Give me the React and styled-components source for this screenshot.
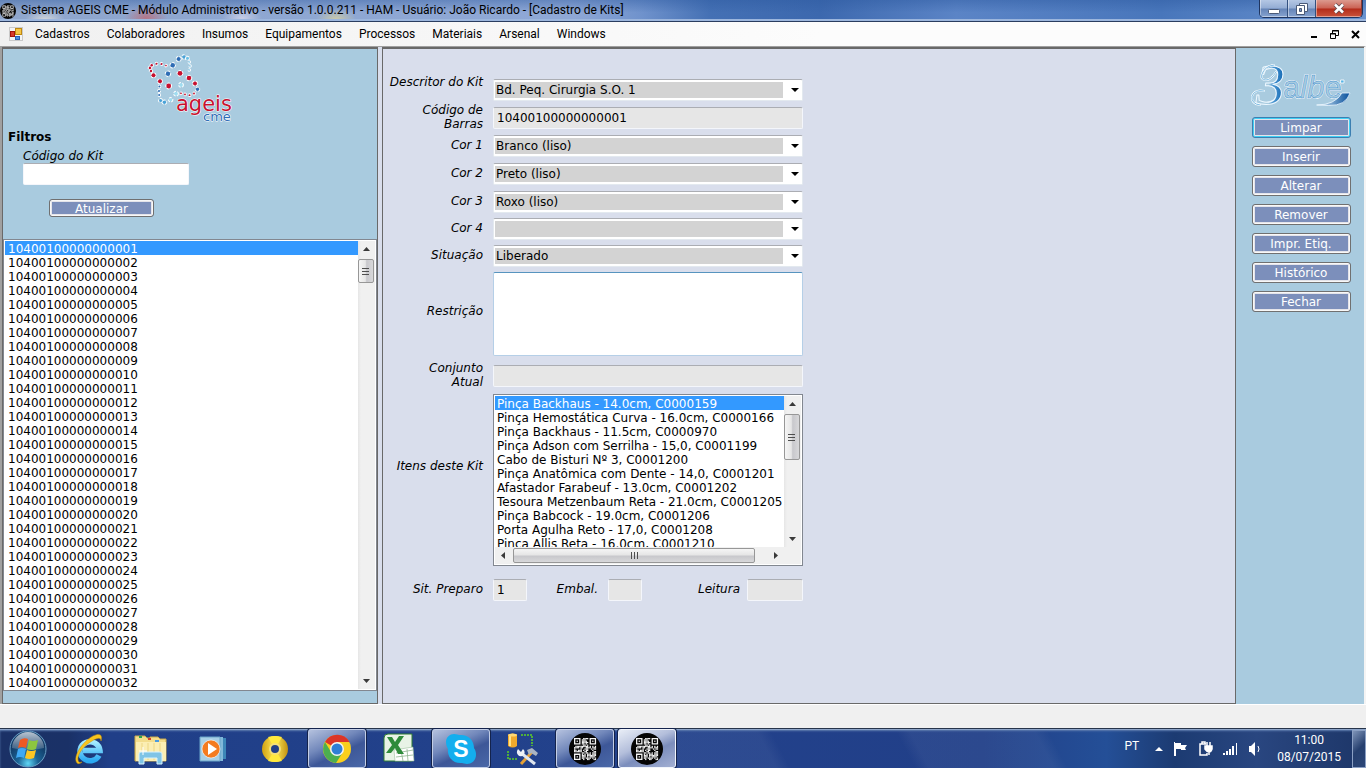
import React from 'react';
import styled, { createGlobalStyle, css } from 'styled-components';

const uiFont = 'Roboto, "Open Sans", sans-serif';
const formFont = '"DejaVu Sans", Verdana, sans-serif';

const GlobalStyle = createGlobalStyle`
  *, *::before, *::after { box-sizing: border-box; }
  body { margin: 0; background: #f0f0f0; font: 12px/14px ${formFont}; color: #000; }
  button, input, select, textarea { font: inherit; color: inherit; margin: 0; border-radius: 0; outline: none; }
`;

const Page = styled.div`
  display: flex;
  flex-direction: column;
  min-height: 100vh;
`;

/* ---------- window frame ---------- */
const TitleBar = styled.header`
  display: flex;
  align-items: flex-start;
  height: 22px;
  border-bottom: 1px solid #2a3d60;
  box-shadow: inset 0 -2px 0 #9cb6dd;
  background:
    radial-gradient(ellipse 20px 10px at 45px 20px, #f3efe0b0, transparent),
    radial-gradient(ellipse 22px 12px at 146px 18px, #d0504f90, transparent),
    radial-gradient(ellipse 20px 10px at 242px 18px, #e8e4f0a0, transparent),
    radial-gradient(ellipse 20px 10px at 336px 19px, #eede90a0, transparent),
    linear-gradient(180deg, #2d5aa070, transparent 60%),
    linear-gradient(90deg, #8fa6cc 0, #8ea7d3 25%, #8fa8d6 42%, #6f92cc 47%, #4470b4 52%, #3c68ae 60%, #5b84c6 70%, #4876bb 85%, #6a93d0 100%);
`;
const AppTitle = styled.h1`
  flex: 1;
  display: flex;
  align-items: center;
  gap: 5px;
  height: 21px;
  margin: 0;
  font: 400 12px/21px ${uiFont};
  white-space: nowrap;
  overflow: hidden;
`;
const WindowButtons = styled.div`
  display: flex;
  height: 18px;
  margin-right: 3px;
  border: 1px solid #1f3560;
  border-top: 0;
  border-radius: 0 0 5px 5px;
  overflow: hidden;
`;
const WindowButton = styled.button`
  display: grid;
  place-items: center;
  width: ${p => (p.$close ? 46 : 28)}px;
  padding: 0;
  border: 0;
  border-right: 1px solid ${p => (p.$close ? '#8e3a34' : '#33507f')};
  box-shadow: inset 1px -1px 0 #ffffff70;
  background: ${p => p.$close
    ? 'linear-gradient(#dc9a8e 0, #cb6253 48%, #b32c1a 52%, #c9533c 100%)'
    : 'linear-gradient(#b4c7e4 0, #93acd3 48%, #6584b7 52%, #86a3d0 100%)'};
`;

const MenuBar = styled.nav`
  display: flex;
  align-items: center;
  height: 24px;
  padding: 0 4px 0 9px;
  background: linear-gradient(90deg, #f0f0f0, #fcfcfc 60%);
`;
const MenuItems = styled.ul`
  flex: 1;
  display: flex;
  gap: 17px;
  margin: 0;
  padding: 0 0 0 12px;
  list-style: none;
`;
const MenuButton = styled.button`
  padding: 0;
  border: 0;
  background: none;
  font: 12px/20px ${uiFont};
`;
const MdiButtons = styled.div`
  display: flex;
  gap: 8px;
`;
const MdiButton = styled.button`
  display: grid;
  place-items: center;
  width: 13px;
  height: 16px;
  padding: 0;
  border: 0;
  background: none;
`;

/* ---------- panels ---------- */
const Workspace = styled.main`
  flex: 1;
  display: grid;
  grid-template-columns: 376px minmax(440px, 1fr) 128px;
  border: solid #a0a0a0;
  border-width: 1px 0 0 2px;
  border-right: 2px solid #f4f4f4;
  background: #d9deec;
`;
const FilterPanel = styled.aside`
  display: flex;
  flex-direction: column;
  padding: 4px 0 12px;
  border: 1px solid #696969;
  border-top-width: 2px;
  background: #a9cbdf;
`;
const FilterForm = styled.form`
  display: flex;
  flex-direction: column;
  align-items: flex-start;
  padding: 6px 5px 22px;
`;
const FilterHeading = styled.h2`
  margin: 0 0 4px;
  font: 700 12px/16px ${formFont};
`;
const FilterLabel = styled.label`
  margin-left: 15px;
  font-style: italic;
`;
const FormPanel = styled.section`
  margin-left: 4px;
  padding: 30px 0 20px;
  border: 1px solid #696969;
  border-top-width: 2px;
`;
const ActionPanel = styled.aside`
  display: flex;
  flex-direction: column;
  align-items: center;
  gap: 8px;
  padding: 3px 0 0 2px;
  border-top: 1px solid #696969;
  background: #a9cbdf;
`;

/* ---------- controls ---------- */
const ActionButton = styled.button`
  width: ${p => (p.$wide ? 105 : 99)}px;
  height: ${p => (p.$wide ? 18 : 21)}px;
  margin: ${p => (p.$wide ? '14px 0 0 41px' : '0')};
  padding: 0;
  border: 1px solid ${p => (p.$focused ? '#3c7fb1' : '#707070')};
  border-radius: 3px;
  box-shadow: inset 0 0 0 1px ${p => (p.$focused ? '#3fd0f5' : '#f8f8f8')}, inset 0 0 0 2px #e4e4ea;
  background: #7c8fbb;
  color: #fff;
  line-height: 18px;
  overflow: hidden;
`;
const TextField = styled.input`
  width: ${p => p.$width || '100%'};
  height: 22px;
  padding: 0 3px;
  border: 1px solid #f4f6fb;
  border-top-color: #abadb3;
  border-radius: 2px;
  background: ${p => (p.readOnly ? '#e6e6e6' : '#fff')};
`;
const FilterField = styled(TextField)`
  margin-left: 15px;
`;
const TextArea = styled.textarea`
  display: block;
  width: 100%;
  height: 84px;
  padding: 2px;
  border: 1px solid #b5cfe7;
  border-top-color: #5794bf;
  border-radius: 2px;
  background: #fff;
  resize: none;
`;
const ComboFrame = styled.div`
  display: grid;
  align-items: center;
  & > * { grid-area: 1 / 1; }
  & > svg { justify-self: end; margin-right: 4px; pointer-events: none; }
`;
const ComboSelect = styled.select`
  appearance: none;
  width: 100%;
  height: 22px;
  padding: 0 20px 0 2px;
  border: 1px solid #e3e9ef;
  border-top-color: #abadb3;
  border-radius: 2px;
  background: linear-gradient(#d3d3d3, #d3d3d3) 1px 2px / calc(100% - 20px) 16px no-repeat #fff;
`;

const Row = styled.div`
  display: grid;
  grid-template-columns: 100px 310px;
  grid-template-rows: 100%;
  column-gap: 10px;
  align-items: center;
  height: ${p => p.$height || 22}px;
  margin-bottom: ${p => p.$gap}px;
`;
const RowLabel = styled.label`
  padding: 0 0 ${p => p.$lift || 3}px ${p => (p.$wrap ? 30 : 0)}px;
  text-align: right;
  font-style: italic;
  white-space: ${p => (p.$wrap ? 'normal' : 'nowrap')};
`;
const StatusFields = styled.div`
  display: flex;
  align-items: center;
`;
const InlineLabel = styled.label`
  flex: ${p => (p.$grow ? '1' : '0 0 81px')};
  padding: 0 ${p => (p.$grow ? 7 : 10)}px 3px 0;
  text-align: right;
  font-style: italic;
`;

/* ---------- list boxes ---------- */
const ListFrame = styled.div`
  display: grid;
  grid-template-columns: minmax(0, 1fr) 17px;
  grid-template-rows: minmax(0, 1fr) ${p => (p.$horizontal ? '17px' : '')};
  padding: 1px;
  border: 1px solid #828790;
  background: #fff;
  ${p => (p.$fill ? css`flex: 1; min-height: 452px;` : css`height: 172px;`)}
`;
const ListBox = styled.select`
  appearance: none;
  width: 100%;
  height: 100%;
  padding: 0;
  border: 0;
  background: #fff;
  overflow: hidden;
  scrollbar-width: none;
  & option {
    height: 14px;
    min-height: 14px;
    padding: 1px 0 0 3px;
    line-height: 14px;
    white-space: nowrap;
  }
  & option:checked {
    background: linear-gradient(#3399ff, #3399ff);
    color: #fff;
  }
`;
const ItemsBox = styled(ListBox)`
  & option { padding-left: 2px; }
`;
const ScrollTrack = styled.div`
  display: flex;
  flex-direction: ${p => (p.$horizontal ? 'row' : 'column')};
  background: ${p => (p.$horizontal ? '#f0f0f0' : 'linear-gradient(90deg, #e6e6e6, #f0f0f0 3px)')};
`;
const ScrollArrow = styled.button`
  display: grid;
  place-items: center;
  width: 17px;
  height: 17px;
  padding: 0;
  border: 0;
  background: none;
`;
const ScrollRun = styled.div`
  flex: 1;
  display: flex;
  flex-direction: ${p => (p.$horizontal ? 'row' : 'column')};
  padding: ${p => (p.$horizontal ? '1px' : '1px 1px 1px 0')};
`;
const ScrollThumb = styled.div`
  flex: 0 0 ${p => p.$length};
  display: grid;
  place-items: center;
  border: 1px solid #979797;
  border-radius: 2px;
  background: linear-gradient(${p => (p.$horizontal ? '180deg' : '90deg')}, #f5f5f5, #e6e6e6 45%, #c8c8cc 55%, #d8d8da);
`;
const ScrollCorner = styled.div`
  background: #f0f0f0;
`;

/* ---------- bottom bars ---------- */
const StatusBar = styled.footer`
  height: 24px;
  border-top: 1px solid #fff;
  background: #f0f0f0;
`;
const Taskbar = styled.nav`
  display: flex;
  justify-content: space-between;
  height: 40px;
  border-top: 1px solid #26344a;
  box-shadow: inset 0 1px 0 #8ba3c8, inset 0 2px 2px #5e7cae;
  background:
    linear-gradient(62deg, transparent 47%, #ffffff0d 49%, #ffffff0d 56%, transparent 57%, transparent 66%, #ffffff0d 67%, #ffffff0d 76%, transparent 77%),
    linear-gradient(90deg, #1b3166 0, #1a3167 5%, #203f88 8%, #23428c 45%, #213f88 72%, #244f97 81%, #1c3b72 86%, #294680 92%, #1d3668 100%);
`;
const TaskGroup = styled.div`
  display: flex;
  gap: 4px;
`;
const TaskButton = styled.button`
  display: grid;
  place-items: center;
  width: ${p => (p.$start ? 56 : 58)}px;
  height: 39px;
  padding: 0;
  border: 1px solid transparent;
  border-radius: 3px;
  background: none;
  ${p => p.$open && css`
    border-color: #c3cee6;
    box-shadow: 0 0 0 1px #14234c;
    background: linear-gradient(155deg, #b4c1de 0, #7288bb 38%, #3d5798 60%, #4a68a8 100%);
  `}
  ${p => p.$active && css`
    border-color: #f0f4fb;
    background: linear-gradient(155deg, #e8edf6 0, #b3bedb 40%, #7b8dbc 60%, #a3b0d3 100%);
  `}
`;
const Tray = styled.div`
  display: flex;
  align-items: center;
  color: #fff;
  font: 12px/17px ${uiFont};
`;
const Language = styled.span`
  padding: 0 15px 4px 0;
`;
const TrayIcons = styled.div`
  display: flex;
  align-items: center;
  gap: 8px;
`;
const TrayButton = styled.button`
  display: grid;
  place-items: center;
  width: ${p => (p.$narrow ? 10 : 17)}px;
  height: 20px;
  padding: 0;
  border: 0;
  background: none;
`;
const Clock = styled.time`
  padding: 0 11px 0 13px;
  text-align: center;
`;
const ShowDesktop = styled.button`
  width: 14px;
  height: 38px;
  padding: 0;
  border: 1px solid #8ba0c4;
  background: linear-gradient(135deg, #7f94b8, #26406f 50%, #2c4678);
`;

/* ---------- drawings ---------- */
const qrCells = (() => {
  const n = 17;
  const cells = [];
  let seed = 29;
  for (let y = 0; y < n; y++) {
    for (let x = 0; x < n; x++) {
      seed = (seed * 1103515245 + 12345) % 2147483648;
      const corner = (x < 6 && y < 6) || (x > 10 && y < 6) || (x < 6 && y > 10);
      if (!corner && seed / 2147483648 > 0.36) cells.push([x, y]);
    }
  }
  return cells;
})();

const QrIcon = ({ size }) => (
  <svg width={size} height={size} viewBox="0 0 32 32" aria-hidden="true">
    <circle cx="16" cy="16" r="16" fill="#050505" />
    <g transform="translate(5 5) scale(1.3)">
      {qrCells.map(([x, y]) => <rect key={`${x}-${y}`} x={x} y={y} width="1" height="1" fill="#f4f4f4" />)}
      {[[0, 0], [12, 0], [0, 12]].map(([x, y]) => (
        <g key={`${x}-${y}`} fill="#f4f4f4">
          <path fillRule="evenodd" d={`M${x} ${y}h5v5h-5zM${x + 1} ${y + 1}v3h3v-3z`} />
          <rect x={x + 2} y={y + 2} width="1" height="1" />
        </g>
      ))}
    </g>
  </svg>
);

const dots = [
  [4, 15, 1.3, '#c8102e'], [5.7, 12.2, 1.2, '#c8102e'], [10.5, 10.8, 1, '#c8102e'], [15.5, 11, 1, '#c8102e'], [20, 12.6, 0.8, '#c8102e'],
  [5, 18, 1.2, '#c8102e'], [7.5, 22.3, 2, '#c8102e'], [14, 28.3, 2, '#c8102e'], [22.7, 33, 2.4, '#c8102e'], [34, 20.3, 2.4, '#c8102e'],
  [43, 25, 2.3, '#c8102e'], [49, 30.5, 2, '#c8102e'], [48, 40.5, 0.9, '#c8102e'], [43.6, 42.2, 0.9, '#c8102e'], [39, 41.4, 0.9, '#c8102e'], [35, 40.4, 0.8, '#c8102e'],
  [26.7, 12.3, 2.2, '#2f6db5'], [32.7, 6, 2, '#2f6db5'], [22, 20.7, 2.2, '#2f6db5'], [51.5, 36.2, 1.7, '#2f6db5'], [13.5, 33.5, 0.9, '#2f6db5'],
  [13, 38, 1, '#2f6db5'], [13.2, 42, 0.9, '#2f6db5'], [14.6, 47.6, 1.5, '#4aa3d8'], [18.4, 49.2, 1.7, '#4aa3d8'], [38, 4, 1.8, '#4aa3d8'], [41.5, 5.2, 1.5, '#6cc0e6'],
  [35, 31.9, 1.9, '#9fdcf0'], [30, 40.7, 1.9, '#9fdcf0'], [24.7, 46.8, 1.7, '#9fdcf0'], [43.2, 9, 0.8, '#6cc0e6'], [44, 13, 0.8, '#6cc0e6'], [43.2, 17, 0.8, '#6cc0e6'],
];
const AgeisLogo = () => (
  <svg width="88" height="70" viewBox="0 0 88 70" role="img" aria-label="ageis cme">
    <g stroke="#fff" strokeWidth="2" strokeDasharray="2 1">
      {dots.map(([x, y, r, fill]) => <circle key={`${x}-${y}`} cx={x} cy={y} r={r} fill={fill} paintOrder="stroke" />)}
    </g>
    <text fontFamily="DejaVu Sans" stroke="#fff" strokeWidth="1" strokeLinejoin="round" paintOrder="stroke">
      <tspan x="30" y="58" fontSize="21" fill="#c8102e">ageis</tspan>
      <tspan x="57" y="68" fontSize="13" fill="#2f6db5">cme</tspan>
    </text>
  </svg>
);
const AgeisMark = styled.div`
  display: flex;
  justify-content: center;
`;

const AlbeLogo = () => (
  <svg width="100" height="58" viewBox="0 -13 100 58" role="img" aria-label="3albe">
    <defs>
      <linearGradient id="albe3"><stop offset="0.45" stopColor="#a9cbdf" /><stop offset="0.6" stopColor="#4b97d2" /><stop offset="1" stopColor="#0c63b0" /></linearGradient>
      <linearGradient id="albeSwoosh"><stop offset="0" stopColor="#d6ebf7" /><stop offset="1" stopColor="#064f9c" /></linearGradient>
    </defs>
    <g strokeLinejoin="round" strokeLinecap="round">
      <text x="5" y="40" fontFamily="Liberation Serif" fontStyle="italic" fontSize="58" fill="url(#albe3)" stroke="#eef8ff" strokeWidth="1">3</text>
      <path d="M25 8Q20 16 15 16Q9 16 11 10Q14 2 23 1M13 27Q4 25 1 32Q0 40 9 41" fill="none" stroke="#fff" strokeWidth="2" />
      <path d="M25 8Q20 16 15 16Q9 16 11 10Q14 2 23 1M13 27Q4 25 1 32Q0 40 9 41" fill="none" stroke="#5aa9dc" strokeWidth="0.8" />
      <text x="32" y="34" fontFamily="Liberation Sans" fontSize="31" fill="#a9cbdf" stroke="#fff" strokeWidth="1.5">
        <tspan>a</tspan><tspan fontStyle="italic">lb</tspan><tspan>e</tspan>
      </text>
      <text x="32" y="34" fontFamily="Liberation Sans" fontSize="31" fill="#a9cbdf" stroke="#3b8fd0" strokeWidth="0.5" aria-hidden="true">
        <tspan>a</tspan><tspan fontStyle="italic">lb</tspan><tspan>e</tspan>
      </text>
      <path d="M66 41Q84 41 91 29H99Q95 42 78 41.5Z" fill="url(#albeSwoosh)" stroke="#eef8ff" strokeWidth="0.8" />
      <rect x="90" y="16" width="3" height="3" fill="#55b4e6" stroke="#fff" strokeWidth="0.8" />
    </g>
  </svg>
);

const FormIcon = () => (
  <svg width="14" height="14" viewBox="0 0 14 14" aria-hidden="true">
    <rect x="0.5" y="0.5" width="13" height="13" fill="#f4f4f4" stroke="#c9c9c9" />
    <rect x="1.5" y="4.5" width="4" height="5" fill="#d8392b" stroke="#a3150c" />
    <rect x="6.5" y="1.5" width="6" height="6" fill="#f6c544" stroke="#c08a12" />
    <rect x="6.5" y="9.5" width="4" height="3" fill="#4f8fe0" stroke="#2a62b8" />
  </svg>
);

const ScrollGlyph = ({ dir }) => {
  const d = { up: 'M1 6 4.5 2 8 6Z', down: 'M1 3 4.5 7 8 3Z', left: 'M6 1 2 4.5 6 8Z', right: 'M3 1 7 4.5 3 8Z' }[dir];
  return <svg width="9" height="9" viewBox="0 0 9 9" aria-hidden="true"><path d={d} fill="#3a3a3a" /></svg>;
};
const Grip = ({ horizontal }) => (
  <svg width="8" height="8" viewBox="0 0 8 8" aria-hidden="true">
    <path d={horizontal ? 'M1.500 0V7M4.500 0V7M7.500 0V7' : 'M0 1.500H7M0 4.500H7M0 7.500H7'} stroke="#4e4e4e" strokeWidth="1" />
  </svg>
);

const StartOrb = () => (
  <svg width="38" height="38" viewBox="0 0 38 38" aria-hidden="true">
    <defs>
      <radialGradient id="orb" cx="0.5" cy="0.9" r="0.8"><stop offset="0" stopColor="#5fd6f5" /><stop offset="0.35" stopColor="#1b6496" /><stop offset="0.8" stopColor="#123a66" /></radialGradient>
      <linearGradient id="orbShine" x2="0" y2="1"><stop offset="0" stopColor="#fff" stopOpacity="0.7" /><stop offset="1" stopColor="#fff" stopOpacity="0.15" /></linearGradient>
    </defs>
    <circle cx="19" cy="19" r="18" fill="url(#orb)" stroke="#6aa0c6" strokeWidth="1" />
    <path d="M3 18A16 16 0 0 1 35 18Q19 22 3 18Z" fill="url(#orbShine)" />
    <path d="M11 10q4-3 8-1l-2 9q-4-2-8 0z" fill="#ee5a24" />
    <path d="M20 10q4 2 9 0l-2 9q-4 2-9 0z" fill="#8cc63f" />
    <path d="M9 19q4-2 8 0l-2 9q-4-2-8 0z" fill="#3fa9f5" />
    <path d="M18 20q4 2 9 0l-2 8q-5 2-9 0z" fill="#fcc624" />
  </svg>
);
const ExplorerE = () => (
  <svg width="32" height="32" viewBox="0 0 32 32" aria-hidden="true">
    <defs><linearGradient id="ieBlue" x2="0" y2="1"><stop offset="0" stopColor="#a6ecff" /><stop offset="1" stopColor="#2aa9f2" /></linearGradient></defs>
    <path d="M26 22.500A10 9.500 0 1 1 27 17.500H10" fill="none" stroke="url(#ieBlue)" strokeWidth="5.500" />
    <path d="M4 30C-1 24 10 8 20 3c6-3 10-2 8 5 0-4-4-3-9 0C10 13 4 22 5 27c0 2 2 3 4 2-2 2-4 2-5 1z" fill="#f7c51e" stroke="#c98e0a" strokeWidth="0.5" />
  </svg>
);
const FolderIcon = () => (
  <svg width="34" height="32" viewBox="0 0 34 32" aria-hidden="true">
    <path d="M1 5V3h10l2 2h3V4h8l2 2h6v22H1z" fill="#f3dd8c" stroke="#c9a94d" />
    <path d="M2 9h30v19H2z" fill="#fbeeb3" />
    <path d="M8 10v17M14 10v17M20 10v17M26 10v17" stroke="#ecd683" />
    <rect x="5" y="3" width="3" height="2" fill="#2da44e" /><rect x="14" y="5" width="3" height="2" fill="#d9412b" /><rect x="21" y="7" width="4" height="2" fill="#4a9be0" />
    <path d="M5 31V21q0-2 2-2h19q2 0 2 2v10h-5v-6H10v6z" fill="#7fc4e6" stroke="#d8f2fd" />
    <path d="M9 14v8M5 18h8" stroke="#fff" strokeWidth="1" />
  </svg>
);
const MediaIcon = () => (
  <svg width="28" height="28" viewBox="0 0 28 28" aria-hidden="true">
    <path d="M6 3h21v21H6z" fill="#3d87b8" /><path d="M3 2h21v24H3z" fill="#82b9da" /><path d="M1 2h20v24H1z" fill="#a8cfe6" stroke="#6aa5c8" />
    <circle cx="12" cy="14" r="9" fill="#f47b20" stroke="#fff" strokeWidth="0.6" /><path d="M9 8l9 6-9 6z" fill="#fff" />
  </svg>
);
const DiscIcon = () => (
  <svg width="28" height="28" viewBox="0 0 28 28" aria-hidden="true">
    <defs><linearGradient id="gold"><stop offset="0" stopColor="#d0a010" /><stop offset="0.5" stopColor="#ffea5c" /><stop offset="1" stopColor="#c09010" /></linearGradient></defs>
    <circle cx="14" cy="14" r="13" fill="url(#gold)" /><path d="M14 14 7 2Q14 0 21 2ZM14 14 7 26Q14 28 21 26Z" fill="#ffe93d" />
    <circle cx="14" cy="14" r="6" fill="#f3df7a" /><circle cx="14" cy="14" r="4" fill="#223f86" />
  </svg>
);
const ChromeIcon = () => (
  <svg width="30" height="30" viewBox="0 0 30 30" aria-hidden="true">
    <circle cx="15" cy="15" r="14" fill="#f9cf1c" />
    <path d="M15 15 3 8A14 14 0 0 1 27.500 8H15Z" fill="#dc3528" />
    <path d="M3 8A14 14 0 0 0 14 29L21 18 9 18Z" fill="#4caf50" />
    <circle cx="15" cy="15" r="7" fill="#f4f4f4" /><circle cx="15" cy="15" r="5.500" fill="#2f7fd6" />
  </svg>
);
const ExcelIcon = () => (
  <svg width="32" height="32" viewBox="0 0 32 32" aria-hidden="true">
    <path d="M1 5Q1 1 5 1H29V28H1Z" fill="#e8f3e6" stroke="#2e7d32" />
    <path d="M11 17l19-3 1 14H12z" fill="#fff" stroke="#9bbf9b" strokeWidth="0.6" /><path d="M13 20l17-3M13 24l17-2M18 17l2 11M24 16l1 12" stroke="#8fb58f" strokeWidth="0.8" />
    <path d="M4 4h5l3 5 4-6h5l-6 9 6 9h-6l-3-6-4 5H3l6-8z" fill="#2e8b3a" />
  </svg>
);
const SkypeIcon = () => (
  <svg width="32" height="32" viewBox="0 0 32 32" aria-hidden="true">
    <path d="M9 1c3 0 4 1 5 1 9-1 15 5 15 13 2 3 2 5 2 7 0 5-4 9-9 9-2 0-4-1-5-1C8 31 2 24 3 16 2 14 1 12 1 9c0-5 4-8 8-8z" fill="#14aeee" />
    <text x="16" y="24" textAnchor="middle" fontFamily="Liberation Sans" fontWeight="700" fontSize="23" fill="#fff">S</text>
  </svg>
);
const ToolsIcon = () => (
  <svg width="34" height="34" viewBox="0 0 34 34" aria-hidden="true">
    <path d="M15 3h11v11M2 19v8h10" fill="none" stroke="#4fae3c" strokeWidth="2" strokeDasharray="2 1" />
    <path d="M2 3q5-3 9 0v11q-4 3-9 0z" fill="#f0a92c" /><path d="M4 3v11" stroke="#ffe28a" strokeWidth="2" /><ellipse cx="6.500" cy="3" rx="4.500" ry="1.500" fill="#ffd873" />
    <path d="M15 32 26 20" stroke="#e5a137" strokeWidth="3" /><path d="M21 18l5-2 6 5-2 3-5-3-2 2z" fill="#aab4c2" />
    <path d="M15 21 29 32" stroke="#dfe6ee" strokeWidth="3" /><path d="M12 17l3 3 2-3a4 4 0 0 1-1 7 4 4 0 0 1-5-5z" fill="#eef2f7" />
  </svg>
);

const trayGlyphs = {
  'Mostrar ícones ocultos': <path d="M0 11 4 7 8 11Z" fill="#fff" />,
  'Central de Ações': <path fillRule="evenodd" d="M2 2h1v1h6v2h6l-2 3 1 2H9V9H4v7H2z" fill="#fff" />,
  Energia: <g fill="none" stroke="#fff" strokeWidth="1.500"><path d="M9 4H3v11h7v-2M5 4V2h3v2" /><path d="M8 6h7v3q-1 3-3 3T8 9zM10 2v4M13 2v4M12 12v3" fill="#fff" /></g>,
  Rede: <path d="M1 15v-2h2v2zM4 15v-4h2v4zM7 15V9h2v6zM10 15V6h2v9zM14 15V3h1v12z" fill="#fff" />,
  'Alto-falantes': <g><path d="M2 6h2l4-4v14l-4-4H2z" fill="#fff" /><path d="M11 6q2 3 0 6" stroke="#fff" fill="none" /></g>,
};

/* ---------- composed parts ---------- */
const ScrollBar = ({ horizontal, length }) => (
  <ScrollTrack $horizontal={horizontal}>
    <ScrollArrow type="button" aria-label={horizontal ? 'Esquerda' : 'Acima'}><ScrollGlyph dir={horizontal ? 'left' : 'up'} /></ScrollArrow>
    <ScrollRun $horizontal={horizontal}>
      <ScrollThumb $horizontal={horizontal} $length={length}><Grip horizontal={horizontal} /></ScrollThumb>
    </ScrollRun>
    <ScrollArrow type="button" aria-label={horizontal ? 'Direita' : 'Abaixo'}><ScrollGlyph dir={horizontal ? 'right' : 'down'} /></ScrollArrow>
  </ScrollTrack>
);

const Combo = ({ id, value }) => (
  <ComboFrame>
    <ComboSelect id={id} defaultValue={value}><option value={value}>{value}</option></ComboSelect>
    <svg width="8" height="6" viewBox="0 0 8 6" aria-hidden="true"><path d="M0 1H8L4 5Z" fill="#000" /></svg>
  </ComboFrame>
);

const menus = ['Cadastros', 'Colaboradores', 'Insumos', 'Equipamentos', 'Processos', 'Materiais', 'Arsenal', 'Windows'];
const kits = Array.from({ length: 32 }, (_, i) => `104001000000000${String(i + 1).padStart(2, '0')}`);
const items = [
  'Pinça Backhaus - 14.0cm, C0000159',
  'Pinça Hemostática Curva - 16.0cm, C0000166',
  'Pinça Backhaus - 11.5cm, C0000970',
  'Pinça Adson com Serrilha - 15,0, C0001199',
  'Cabo de Bisturi Nº 3, C0001200',
  'Pinça Anatômica com Dente - 14,0, C0001201',
  'Afastador Farabeuf - 13.0cm, C0001202',
  'Tesoura Metzenbaum Reta - 21.0cm, C0001205',
  'Pinça Babcock - 19.0cm, C0001206',
  'Porta Agulha Reto - 17,0, C0001208',
  'Pinça Allis Reta - 16.0cm, C0001210',
];
const combos = [
  { id: 'cor1', label: 'Cor 1', value: 'Branco (liso)', gap: 6 },
  { id: 'cor2', label: 'Cor 2', value: 'Preto (liso)', gap: 6 },
  { id: 'cor3', label: 'Cor 3', value: 'Roxo (liso)', gap: 5 },
  { id: 'cor4', label: 'Cor 4', value: '', gap: 5 },
  { id: 'situacao', label: 'Situação', value: 'Liberado', gap: 5 },
];
const actions = ['Limpar', 'Inserir', 'Alterar', 'Remover', 'Impr. Etiq.', 'Histórico', 'Fechar'];
const tasks = [
  { name: 'Internet Explorer', icon: <ExplorerE /> },
  { name: 'Windows Explorer', icon: <FolderIcon /> },
  { name: 'Media Player', icon: <MediaIcon /> },
  { name: 'Disco', icon: <DiscIcon /> },
  { name: 'Chrome', icon: <ChromeIcon />, open: true },
  { name: 'Excel', icon: <ExcelIcon /> },
  { name: 'Skype', icon: <SkypeIcon />, open: true },
  { name: 'Ferramentas de banco de dados', icon: <ToolsIcon /> },
  { name: 'AGEIS', icon: <QrIcon size={32} />, open: true },
  { name: 'AGEIS CME', icon: <QrIcon size={32} />, open: true, active: true },
];

export default function App() {
  return (
    <Page>
      <GlobalStyle />
      <TitleBar>
        <AppTitle>
          <QrIcon size={16} />
          Sistema AGEIS CME - Módulo Administrativo - versão 1.0.0.211 - HAM - Usuário: João Ricardo - [Cadastro de Kits]
        </AppTitle>
        <WindowButtons>
          <WindowButton aria-label="Minimizar">
            <svg width="12" height="14" viewBox="0 0 12 14"><rect x="0.5" y="7.500" width="11" height="4" rx="1" fill="#fff" stroke="#4a5a78" /></svg>
          </WindowButton>
          <WindowButton aria-label="Restaurar">
            <svg width="12" height="12" viewBox="0 0 12 12" fill="#fff" stroke="#4a5a78"><path d="M3.500.500h8v8h-8z" /><path d="M.500 2.500h8v9h-8z" /><path d="M3.500 5.500h2v3h-2z" fill="#7c97c5" /></svg>
          </WindowButton>
          <WindowButton $close aria-label="Fechar janela">
            <svg width="12" height="11" viewBox="0 0 12 11"><path d="M2 1.500 10 9.500M10 1.500 2 9.500" stroke="#5b4a50" strokeWidth="4" /><path d="M2 1.500 10 9.500M10 1.500 2 9.500" stroke="#fff" strokeWidth="2.500" /></svg>
          </WindowButton>
        </WindowButtons>
      </TitleBar>
      <MenuBar>
        <FormIcon />
        <MenuItems>{menus.map(m => <li key={m}><MenuButton type="button">{m}</MenuButton></li>)}</MenuItems>
        <MdiButtons>
          <MdiButton aria-label="Minimizar formulário"><svg width="9" height="9" viewBox="0 0 9 9"><path d="M2 6h6v2H2z" /></svg></MdiButton>
          <MdiButton aria-label="Restaurar formulário"><svg width="9" height="9" viewBox="0 0 9 9" fill="none" stroke="#000"><path d="M2.500 3V.500h6v5H6M2 1h7M.500 3.500h5v5h-5zM0 4h6" /></svg></MdiButton>
          <MdiButton aria-label="Fechar formulário"><svg width="9" height="9" viewBox="0 0 9 9"><path d="M1 1l7 7M8 1 1 8" stroke="#000" strokeWidth="2" /></svg></MdiButton>
        </MdiButtons>
      </MenuBar>

      <Workspace>
        <FilterPanel>
          <AgeisMark><AgeisLogo /></AgeisMark>
          <FilterForm onSubmit={e => e.preventDefault()}>
            <FilterHeading>Filtros</FilterHeading>
            <FilterLabel htmlFor="codigo-kit">Código do Kit</FilterLabel>
            <FilterField id="codigo-kit" $width="166px" />
            <ActionButton type="submit" $wide>Atualizar</ActionButton>
          </FilterForm>
          <ListFrame $fill>
            <ListBox aria-label="Kits" size={32} defaultValue={kits[0]}>
              {kits.map(k => <option key={k} value={k}>{k}</option>)}
            </ListBox>
            <ScrollBar length="24px" />
          </ListFrame>
        </FilterPanel>

        <FormPanel>
          <Row $gap={6}>
            <RowLabel htmlFor="descritor" $lift={17}>Descritor do Kit</RowLabel>
            <Combo id="descritor" value="Bd. Peq. Cirurgia S.O. 1" />
          </Row>
          <Row $gap={6}>
            <RowLabel htmlFor="barras" $wrap>Código de Barras</RowLabel>
            <TextField id="barras" readOnly defaultValue="10400100000000001" />
          </Row>
          {combos.map(c => (
            <Row key={c.id} $gap={c.gap}>
              <RowLabel htmlFor={c.id}>{c.label}</RowLabel>
              <Combo id={c.id} value={c.value} />
            </Row>
          ))}
          <Row $height={84} $gap={9}>
            <RowLabel htmlFor="restricao" $lift={6}>Restrição</RowLabel>
            <TextArea id="restricao" />
          </Row>
          <Row $gap={7}>
            <RowLabel htmlFor="conjunto" $wrap>Conjunto Atual</RowLabel>
            <TextField id="conjunto" readOnly />
          </Row>
          <Row $height={172} $gap={13}>
            <RowLabel htmlFor="itens" $lift={28}>Itens deste Kit</RowLabel>
            <ListFrame $horizontal>
              <ItemsBox id="itens" size={10} defaultValue={items[0]}>
                {items.map(t => <option key={t} value={t}>{t}</option>)}
              </ItemsBox>
              <ScrollBar length="46px" />
              <ScrollBar horizontal length="242px" />
              <ScrollCorner />
            </ListFrame>
          </Row>
          <Row>
            <RowLabel htmlFor="preparo">Sit. Preparo</RowLabel>
            <StatusFields>
              <TextField id="preparo" readOnly defaultValue="1" $width="34px" />
              <InlineLabel htmlFor="embal">Embal.</InlineLabel>
              <TextField id="embal" readOnly $width="34px" />
              <InlineLabel htmlFor="leitura" $grow>Leitura</InlineLabel>
              <TextField id="leitura" readOnly $width="56px" />
            </StatusFields>
          </Row>
        </FormPanel>

        <ActionPanel>
          <AlbeLogo />
          {actions.map((a, i) => <ActionButton key={a} type="button" $focused={i === 0}>{a}</ActionButton>)}
        </ActionPanel>
      </Workspace>

      <StatusBar />
      <Taskbar aria-label="Barra de tarefas">
        <TaskGroup>
          <TaskButton $start aria-label="Iniciar"><StartOrb /></TaskButton>
          {tasks.map(t => <TaskButton key={t.name} $open={t.open} $active={t.active} aria-label={t.name}>{t.icon}</TaskButton>)}
        </TaskGroup>
        <Tray>
          <Language>PT</Language>
          <TrayIcons>
            {Object.entries(trayGlyphs).map(([name, glyph], i) => (
              <TrayButton key={name} $narrow={i === 0} aria-label={name}>
                <svg width={i ? 17 : 9} height="18" viewBox={i ? '0 0 17 18' : '0 0 9 18'}>{glyph}</svg>
              </TrayButton>
            ))}
          </TrayIcons>
          <Clock dateTime="2015-07-08T11:00">11:00<br />08/07/2015</Clock>
          <ShowDesktop aria-label="Mostrar área de trabalho" />
        </Tray>
      </Taskbar>
    </Page>
  );
}
